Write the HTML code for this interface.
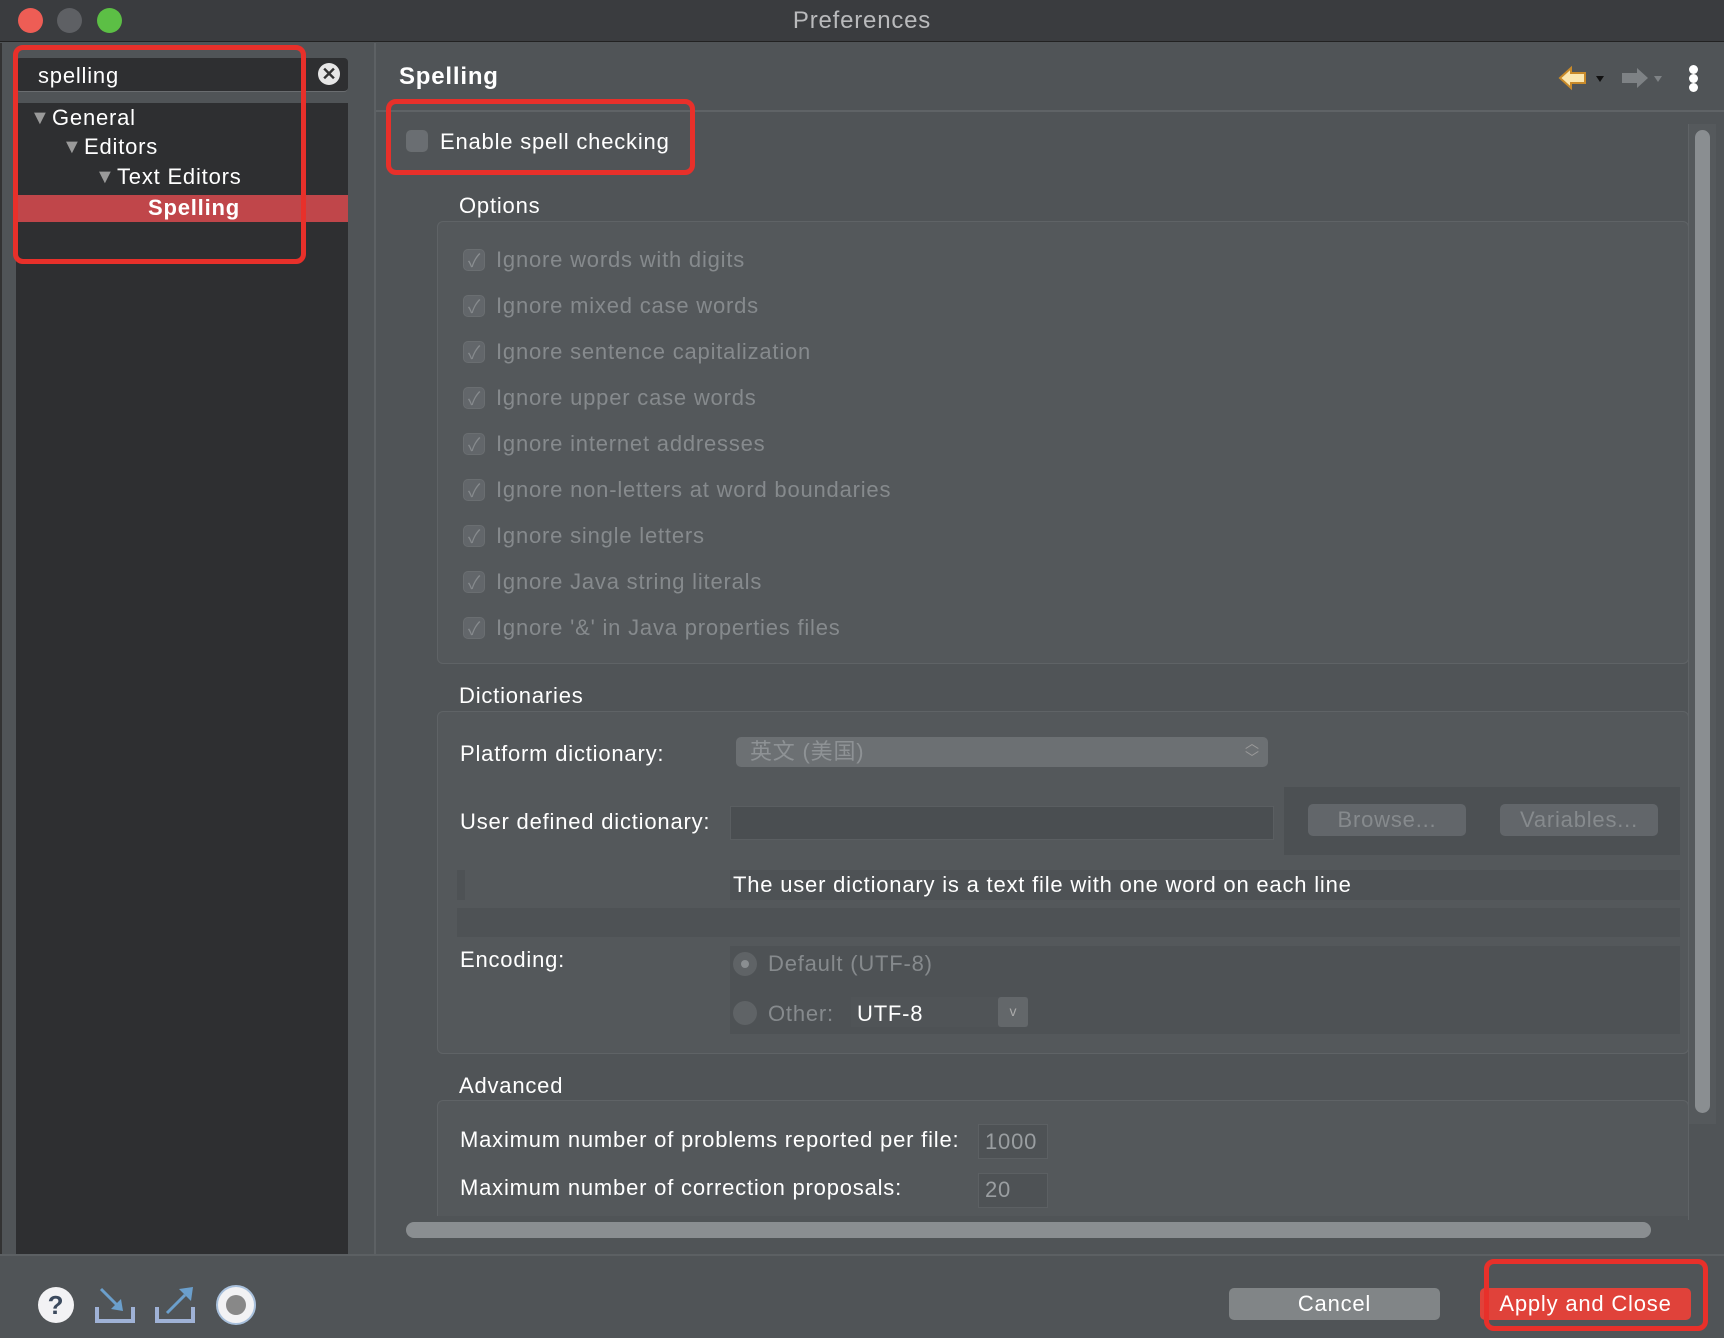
<!DOCTYPE html>
<html><head><meta charset="utf-8"><style>
*{margin:0;padding:0;box-sizing:border-box}
body{width:1724px;height:1338px;overflow:hidden;background:#505457;font-family:"Liberation Sans","Noto Sans CJK SC",sans-serif;font-size:22px;color:#fff;position:relative;letter-spacing:0.8px}
div,span{position:absolute}
.t{line-height:26px;white-space:nowrap}
.dis{color:#868a8d}
.cb{width:22px;height:22px;border-radius:5px;background:#62666a;border:1px solid #6a6e71}
.red{border:5px solid #e8302a;border-radius:10px}
.btn{border-radius:5px;text-align:center;line-height:32px}
</style></head><body>
<!-- title bar -->
<div style="left:0;top:0;width:1724px;height:42px;background:#3a3c3f;border-bottom:1px solid #222"></div>
<div style="left:18px;top:8px;width:25px;height:25px;border-radius:50%;background:#ee5d55"></div>
<div style="left:57px;top:8px;width:25px;height:25px;border-radius:50%;background:#5e6064"></div>
<div style="left:97px;top:8px;width:25px;height:25px;border-radius:50%;background:#5cbf45"></div>
<div class="t" style="left:0;width:1724px;top:8px;text-align:center;font-size:24px;color:#b9babc">Preferences</div>
<!-- left panel -->
<div style="left:0;top:43px;width:16px;height:1211px;background:#505457;border-left:2px solid #333"></div>
<div style="left:16px;top:43px;width:332px;height:1211px;background:#2e2f31"></div>
<div style="left:16px;top:43px;width:332px;height:60px;background:#505457"></div>
<div style="left:16px;top:58px;width:332px;height:34px;background:#2e2f31;border-bottom:1px solid #6a6d70;border-radius:4px"></div>
<div class="t" style="left:38px;top:63px">spelling</div>
<div style="left:318px;top:63px;width:22px;height:22px;border-radius:50%;background:#e6e6e6;color:#333;font-size:18px;line-height:22px;text-align:center;font-weight:bold;letter-spacing:0">✕</div>
<div style="left:348px;top:43px;width:26px;height:1211px;background:#505457"></div>
<div style="left:374px;top:43px;width:2px;height:1211px;background:#5d6164"></div>
<div class="t" style="left:30px;top:105px;font-size:20px;color:#9a9a9a">▼</div>
<div class="t" style="left:52px;top:105px">General</div>
<div class="t" style="left:62px;top:134px;font-size:20px;color:#9a9a9a">▼</div>
<div class="t" style="left:84px;top:134px">Editors</div>
<div class="t" style="left:95px;top:164px;font-size:20px;color:#9a9a9a">▼</div>
<div class="t" style="left:117px;top:164px">Text Editors</div>
<div style="left:16px;top:195px;width:332px;height:27px;background:#c0464a"></div>
<div class="t" style="left:148px;top:195px;font-weight:bold">Spelling</div>
<div class="red" style="left:13px;top:45px;width:293px;height:219px"></div>
<!-- right header -->
<div class="t" style="left:399px;top:64px;font-weight:bold;font-size:24px">Spelling</div>
<div style="left:376px;top:110px;width:1348px;height:2px;background:#5f6366"></div>
<svg style="position:absolute;left:1558px;top:60px" width="50" height="36" viewBox="0 0 50 36"><path d="M2 18 L13 8 L13 13 L27 13 L27 23 L13 23 L13 28 Z" fill="#fbe7b0" stroke="#c88a2a" stroke-width="2"/><path d="M38 16 L46 16 L42 22Z" fill="#111"/></svg>
<svg style="position:absolute;left:1618px;top:60px" width="50" height="36" viewBox="0 0 50 36"><path d="M30 18 L19 8 L19 13 L4 13 L4 23 L19 23 L19 28 Z" fill="#7e8285"/><path d="M36 16 L44 16 L40 22Z" fill="#7e8285"/></svg>
<div style="left:1689px;top:65px;width:9px;height:9px;border-radius:50%;background:#fff"></div>
<div style="left:1689px;top:74px;width:9px;height:9px;border-radius:50%;background:#fff"></div>
<div style="left:1689px;top:83px;width:9px;height:9px;border-radius:50%;background:#fff"></div>
<!-- vertical scrollbar -->
<div style="left:1688px;top:124px;width:28px;height:1000px;background:#55595c;border-left:1px solid #5f6366"></div>
<div style="left:1695px;top:130px;width:15px;height:983px;border-radius:8px;background:#8a8e91"></div>
<!-- enable -->
<div class="cb" style="left:406px;top:130px;background:#6a6e72"></div>
<div class="t" style="left:440px;top:129px">Enable spell checking</div>
<div class="red" style="left:386px;top:99px;width:309px;height:76px"></div>
<!-- options -->
<div class="t" style="left:459px;top:193px">Options</div>
<div style="left:437px;top:221px;width:1252px;height:443px;border:1px solid #5f6366;border-radius:6px;background:#54585b"></div>
<div class="cb" style="left:463px;top:249px"></div><div class="t dis" style="left:468px;top:248px;font-size:18px;color:#8a8e91">✓</div><div class="t dis" style="left:496px;top:247px">Ignore words with digits</div>
<div class="cb" style="left:463px;top:295px"></div><div class="t dis" style="left:468px;top:294px;font-size:18px">✓</div><div class="t dis" style="left:496px;top:293px">Ignore mixed case words</div>
<div class="cb" style="left:463px;top:341px"></div><div class="t dis" style="left:468px;top:340px;font-size:18px">✓</div><div class="t dis" style="left:496px;top:339px">Ignore sentence capitalization</div>
<div class="cb" style="left:463px;top:387px"></div><div class="t dis" style="left:468px;top:386px;font-size:18px">✓</div><div class="t dis" style="left:496px;top:385px">Ignore upper case words</div>
<div class="cb" style="left:463px;top:433px"></div><div class="t dis" style="left:468px;top:432px;font-size:18px">✓</div><div class="t dis" style="left:496px;top:431px">Ignore internet addresses</div>
<div class="cb" style="left:463px;top:479px"></div><div class="t dis" style="left:468px;top:478px;font-size:18px">✓</div><div class="t dis" style="left:496px;top:477px">Ignore non-letters at word boundaries</div>
<div class="cb" style="left:463px;top:525px"></div><div class="t dis" style="left:468px;top:524px;font-size:18px">✓</div><div class="t dis" style="left:496px;top:523px">Ignore single letters</div>
<div class="cb" style="left:463px;top:571px"></div><div class="t dis" style="left:468px;top:570px;font-size:18px">✓</div><div class="t dis" style="left:496px;top:569px">Ignore Java string literals</div>
<div class="cb" style="left:463px;top:617px"></div><div class="t dis" style="left:468px;top:616px;font-size:18px">✓</div><div class="t dis" style="left:496px;top:615px">Ignore '&amp;' in Java properties files</div>
<!-- dictionaries -->
<div class="t" style="left:459px;top:683px">Dictionaries</div>
<div style="left:437px;top:711px;width:1252px;height:343px;border:1px solid #5f6366;border-radius:6px;background:#54585b"></div>
<div class="t" style="left:460px;top:741px">Platform dictionary:</div>
<div style="left:736px;top:737px;width:532px;height:30px;border-radius:5px;background:#6c7073"></div>
<div class="t" style="left:750px;top:739px;color:#8e9295">英文 (美国)</div>
<div class="t" style="left:1245px;top:736px;font-size:14px;color:#9a9a9a;line-height:15px;letter-spacing:0">︿<br>﹀</div>
<div style="left:1284px;top:787px;width:396px;height:68px;background:#4c5053"></div>
<div class="t" style="left:460px;top:809px">User defined dictionary:</div>
<div style="left:730px;top:806px;width:544px;height:34px;background:#4a4e51;border:1px solid #5a5e61"></div>
<div class="btn dis" style="left:1308px;top:804px;width:158px;height:32px;background:#62666a">Browse...</div>
<div class="btn dis" style="left:1500px;top:804px;width:158px;height:32px;background:#62666a">Variables...</div>
<div style="left:730px;top:870px;width:950px;height:30px;background:#4e5255"></div>
<div style="left:457px;top:870px;width:8px;height:30px;background:#4e5255"></div>
<div class="t" style="left:733px;top:872px">The user dictionary is a text file with one word on each line</div>
<div style="left:457px;top:908px;width:1223px;height:29px;background:#4e5255"></div>
<div class="t" style="left:460px;top:947px">Encoding:</div>
<div style="left:730px;top:946px;width:950px;height:88px;background:#4e5255"></div>
<div style="left:733px;top:952px;width:24px;height:24px;border-radius:50%;background:#5f6366"></div>
<div style="left:741px;top:960px;width:8px;height:8px;border-radius:50%;background:#8a8e91"></div>
<div class="t dis" style="left:768px;top:951px">Default (UTF-8)</div>
<div style="left:733px;top:1001px;width:24px;height:24px;border-radius:50%;background:#5f6366"></div>
<div class="t dis" style="left:768px;top:1001px">Other:</div>
<div style="left:851px;top:997px;width:177px;height:30px;background:#505457"></div>
<div style="left:998px;top:997px;width:30px;height:30px;background:#63676a;border-radius:3px;color:#aaa;font-size:14px;text-align:center;line-height:28px;letter-spacing:0">v</div>
<div class="t" style="left:857px;top:1001px">UTF-8</div>
<!-- advanced -->
<div class="t" style="left:459px;top:1073px">Advanced</div>
<div style="left:437px;top:1100px;width:1252px;height:120px;border:1px solid #5f6366;border-bottom:none;border-radius:6px 6px 0 0;background:#54585b"></div>
<div class="t" style="left:460px;top:1127px">Maximum number of problems reported per file:</div>
<div style="left:978px;top:1124px;width:70px;height:35px;background:#4e5255;border:1px solid #5c6063"></div>
<div class="t dis" style="left:985px;top:1129px;color:#9a9ea1">1000</div>
<div class="t" style="left:460px;top:1175px">Maximum number of correction proposals:</div>
<div style="left:978px;top:1173px;width:70px;height:35px;background:#4e5255;border:1px solid #5c6063"></div>
<div class="t dis" style="left:985px;top:1177px;color:#9a9ea1">20</div>
<!-- h scroll -->
<div style="left:376px;top:1216px;width:1312px;height:30px;background:#505457"></div>
<div style="left:406px;top:1222px;width:1245px;height:16px;border-radius:8px;background:#8a8e91"></div>
<div style="left:0;top:1254px;width:1724px;height:2px;background:#5c6063"></div>
<!-- bottom -->
<svg style="position:absolute;left:36px;top:1285px" width="40" height="40" viewBox="0 0 40 40"><circle cx="20" cy="20" r="18" fill="#f2f2f4"/><text x="20" y="29" text-anchor="middle" font-family="Liberation Sans" font-weight="bold" font-size="26" fill="#3c4a5e">?</text></svg>
<svg style="position:absolute;left:93px;top:1285px" width="44" height="40" viewBox="0 0 44 40"><path d="M4 22 V36 H40 V22" fill="none" stroke="#9fb2d6" stroke-width="4"/><path d="M8 4 L26 22" stroke="#6b9fcc" stroke-width="3"/><path d="M18 24 L30 26 L28 14 Z" fill="#6b9fcc"/></svg>
<svg style="position:absolute;left:153px;top:1283px" width="44" height="42" viewBox="0 0 44 42"><path d="M4 24 V38 H40 V24" fill="none" stroke="#9fb2d6" stroke-width="4"/><path d="M14 30 L32 12" stroke="#6b9fcc" stroke-width="3"/><path d="M26 6 L40 4 L38 18 Z" fill="#6b9fcc"/></svg>
<div style="left:216px;top:1285px;width:40px;height:40px;border-radius:50%;background:#f2f2f4;border:2px solid #a8c0dc"></div>
<div style="left:226px;top:1295px;width:20px;height:20px;border-radius:50%;background:#888"></div>
<div class="btn" style="left:1229px;top:1288px;width:211px;height:32px;background:#818587">Cancel</div>
<div class="btn" style="left:1480px;top:1288px;width:211px;height:32px;background:#e0423a">Apply and Close</div>
<div class="red" style="left:1484px;top:1259px;width:224px;height:72px"></div>
</body></html>
